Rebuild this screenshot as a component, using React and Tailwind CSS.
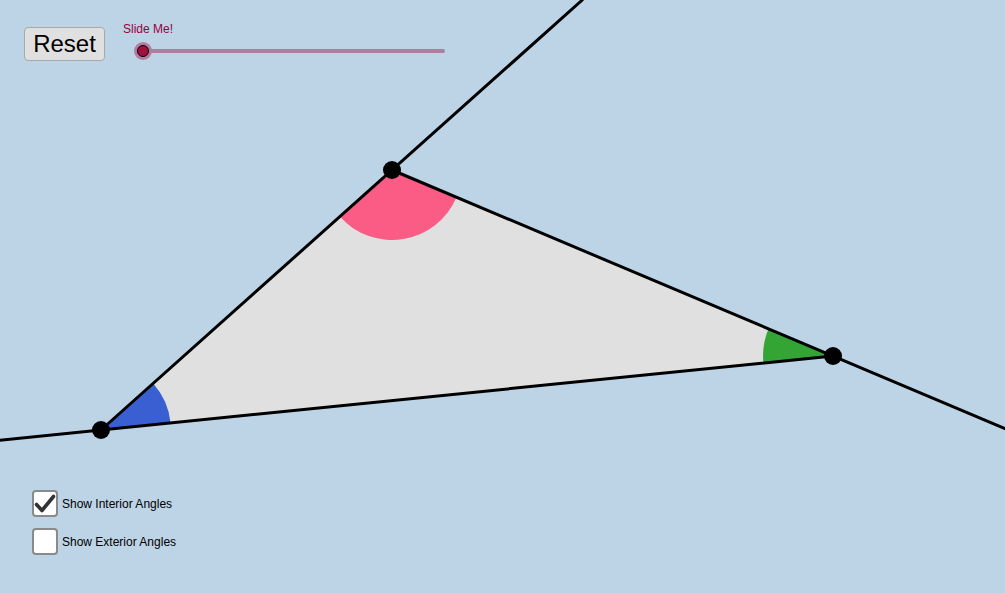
import React from "react";

export default function App() {
  const A = [101, 430];
  const B = [392, 170];
  const C = [833, 356];
  return (
    <div
      className="relative w-[1005px] h-[593px] overflow-hidden bg-[#bdd4e7]"
      style={{ fontFamily: '"Liberation Sans", Arial, sans-serif' }}
    >
      <svg className="absolute inset-0" width="1005" height="593" viewBox="0 0 1005 593">
        <polygon points={`${A} ${B} ${C}`} fill="#e0e0e0" />
        <path d="M392 170 L456.5 197.2 A70 70 0 0 1 339.8 216.6 Z" fill="#fb5c85" />
        <path d="M101 430 L170.6 423 A70 70 0 0 0 153.2 383.4 Z" fill="#3a5fd2" />
        <path d="M833 356 L763.4 363 A70 70 0 0 1 768.5 328.8 Z" fill="#34a534" />
        <g stroke="#000" strokeWidth="3" strokeLinecap="round">
          <line x1="833" y1="356" x2="-5" y2="440.7" />
          <line x1="101" y1="430" x2="582.3" y2="0" />
          <line x1="392" y1="170" x2="1010" y2="430.7" />
        </g>
        <g fill="#000">
          <circle cx={A[0]} cy={A[1]} r="9" />
          <circle cx={B[0]} cy={B[1]} r="9" />
          <circle cx={C[0]} cy={C[1]} r="9" />
        </g>
      </svg>

      <div className="absolute left-[24px] top-[27px] flex items-start gap-[18px]">
        <button className="w-[81px] h-[34px] rounded-[4px] border border-[#a8a8a8] bg-[#e0e0e0] text-[24px] leading-none text-black flex items-center justify-center">
          Reset
        </button>
        <div className="flex flex-col -mt-[5px]">
          <span className="text-[12px] leading-[14px] text-[#99003d] pl-[0px]">Slide Me!</span>
          <div className="relative w-[322px] h-[18px] mt-[6px]">
            <div className="absolute left-[19px] right-0 top-[7px] h-[4px] rounded-full bg-[#b27c9f]" />
            <div className="absolute left-[11px] top-0 w-[18px] h-[18px] rounded-full bg-[#b27c9f] flex items-center justify-center">
              <div className="w-[12px] h-[12px] rounded-full bg-[#a2103f] border border-black" />
            </div>
          </div>
        </div>
      </div>

      <div className="absolute left-[32px] top-[490px] flex flex-col gap-[11px]">
        <label className="flex items-center gap-[4px]">
          <span className="w-[26px] h-[27px] rounded-[4px] border-2 border-[#8a8a8a] bg-white flex items-center justify-center">
            <svg width="22" height="20" viewBox="0 0 22 20">
              <path d="M2.5 10.5 L8 16.5 L19.5 2.5" fill="none" stroke="#333" strokeWidth="3.6" strokeLinecap="round" strokeLinejoin="round" />
            </svg>
          </span>
          <span className="text-[12px] text-black">Show Interior Angles</span>
        </label>
        <label className="flex items-center gap-[4px]">
          <span className="w-[26px] h-[27px] rounded-[4px] border-2 border-[#8a8a8a] bg-white" />
          <span className="text-[12px] text-black">Show Exterior Angles</span>
        </label>
      </div>
    </div>
  );
}
